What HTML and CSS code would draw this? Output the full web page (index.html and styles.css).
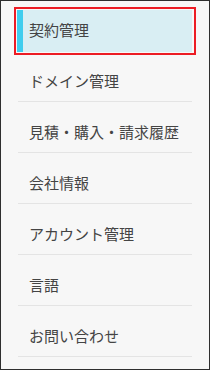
FILE: index.html
```html
<!DOCTYPE html>
<html lang="ja">
<head>
<meta charset="utf-8">
<link rel="stylesheet" href="styles.css">
</head>
<body>
<div class="frame">
  <ul class="menu">
    <li class="item active"><span class="label">契約管理</span></li>
    <li class="item"><span class="label">ドメイン管理</span></li>
    <li class="item"><span class="label">見積・購入・請求履歴</span></li>
    <li class="item"><span class="label">会社情報</span></li>
    <li class="item"><span class="label">アカウント管理</span></li>
    <li class="item"><span class="label">言語</span></li>
    <li class="item"><span class="label">お問い合わせ</span></li>
  </ul>
</div>
</body>
</html>
```

FILE: styles.css
```css
html, body {
  margin: 0;
  padding: 0;
}
body {
  width: 210px;
  height: 370px;
  font-family: "Noto Sans CJK JP", "Noto Sans", sans-serif;
}
.frame {
  box-sizing: border-box;
  width: 210px;
  height: 370px;
  border: 1px solid #2e2e2e;
  background: #f7f7f7;
  overflow: hidden;
}
.menu {
  list-style: none;
  margin: -1px 17px 0;
  padding: 0;
}
.item {
  position: relative;
  height: 50px;
  box-sizing: content-box;
  border-bottom: 1px solid #e4e4e4;
  padding: 0 0 0 11px;
  font-size: 15px;
  line-height: 25px;
  color: #444444;
}
.label {
  position: relative;
  z-index: 2;
  display: block;
  padding-top: 17px;
}
.item.active::before {
  content: "";
  position: absolute;
  left: -1px;
  top: 10px;
  width: 175px;
  height: 42px;
  background: #d9eef3;
  border-left: 6px solid #3fcdee;
  box-sizing: border-box;
  z-index: 1;
}
.item.active::after {
  content: "";
  position: absolute;
  left: -4px;
  top: 7px;
  width: 182px;
  height: 48px;
  box-sizing: border-box;
  border: 2px solid #ec1c24;
  z-index: 3;
}
```
